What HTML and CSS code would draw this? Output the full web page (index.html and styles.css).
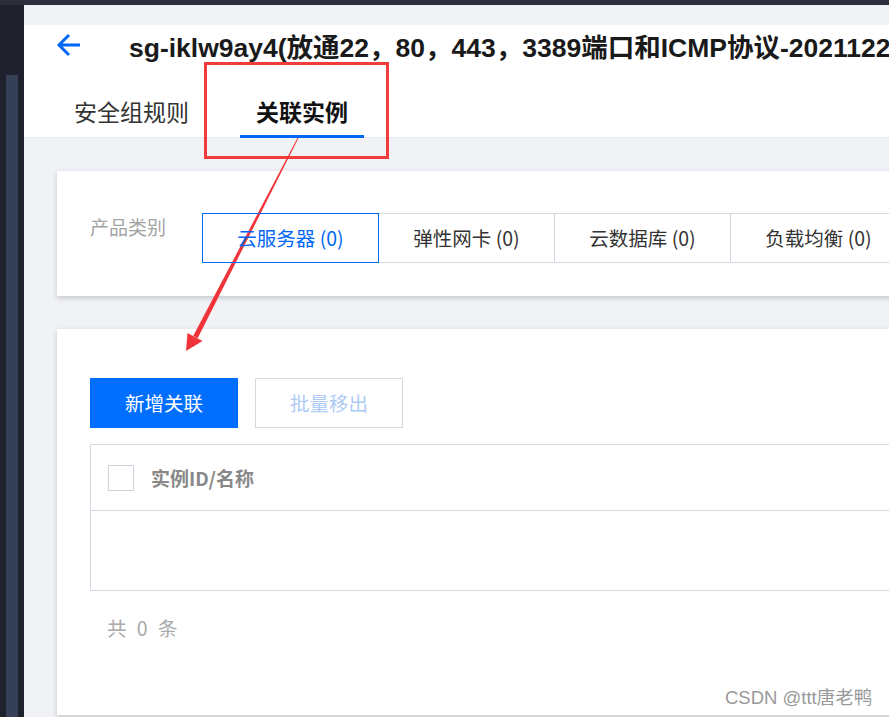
FILE: index.html
```html
<!DOCTYPE html>
<html lang="zh-CN">
  <head>
    <meta charset="UTF-8" />
    <meta name="viewport" content="width=device-width, initial-scale=1.0" />
    <title>关联实例</title>
    <link rel="stylesheet" href="styles.css">
  </head>
  <body>
    <div id="topbar"></div>
    <div id="frame">
      <div id="side">
        <div class="side-bar"></div>
      </div>
      <div id="page">
        <div id="head">
          <div class="title-row">
            <svg class="back" width="26" height="24" viewBox="0 0 26 24">
              <path d="M24 12H3M13 2L3 12l10 10" fill="none" stroke="#0067f7" stroke-width="3" />
            </svg>
            <h1>sg-iklw9ay4(放通22，80，443，3389端口和ICMP协议-20211223</h1>
          </div>
          <div class="tabs">
            <span class="tab">安全组规则</span>
            <span class="tab active">关联实例</span>
          </div>
        </div>
        <div id="content">
          <div class="card filter">
            <span class="label">产品类别</span>
            <div class="seg">
              <span class="seg-item active">云服务器 (0)</span>
              <span class="seg-item">弹性网卡 (0)</span>
              <span class="seg-item">云数据库 (0)</span>
              <span class="seg-item">负载均衡 (0)</span>
            </div>
          </div>
          <div class="card list">
            <div class="btns">
              <a class="btn primary">新增关联</a>
              <a class="btn disabled">批量移出</a>
            </div>
            <div class="table">
              <div class="thead">
                <span class="check"></span>
                <span class="col">实例ID/名称</span>
              </div>
              <div class="tbody"></div>
            </div>
            <div class="total">共&nbsp;0&nbsp;条</div>
          </div>
        </div>
      </div>
    </div>

    <!-- annotation -->
    <div class="mark-box"></div>
    <svg class="mark-arrow" width="889" height="717" viewBox="0 0 889 717">
      <polygon points="298.4,138.2 297.6,137.8 193.3,335.8 197.7,338.2" fill="#f0343a" />
      <polygon points="186,351 187.5,333 202.5,341" fill="#f0343a" />
    </svg>
    <div class="watermark">CSDN @ttt唐老鸭</div>
  </body>
</html>
```

FILE: styles.css
```css
* {
  margin: 0;
  padding: 0;
  box-sizing: border-box;
}
html,
body {
  width: 889px;
  height: 717px;
  overflow: hidden;
}
body {
  background: #1f222d;
  font-family: "Noto Sans CJK SC", "Liberation Sans", sans-serif;
  color: #333;
  position: relative;
}
#topbar {
  height: 5px;
  background: #2a2f3b;
}
#frame {
  display: flex;
  height: 712px;
}
#side {
  width: 24px;
  flex-shrink: 0;
  padding: 70px 6px 0;
}
.side-bar {
  height: 100%;
  background: #353f55;
}
#page {
  flex: 1;
  background: #f1f2f6;
  overflow: hidden;
}
#head {
  background: #fff;
  border-bottom: 1px solid #e6e9ef;
}
.title-row {
  display: flex;
  align-items: center;
  height: 40px;
  margin-top: 20px;
  padding-left: 32px;
}
.back {
  flex-shrink: 0;
}
h1 {
  margin-left: 47px;
  font-family: "Liberation Sans", "Noto Sans CJK SC", sans-serif;
  font-size: 26.5px;
  font-weight: bold;
  color: #1a1a1a;
  white-space: nowrap;
}
.tabs {
  display: flex;
  gap: 34px;
  margin-top: 23px;
  margin-bottom: -1px;
  padding-left: 33px;
}
.tab {
  padding: 0 17px;
  height: 50px;
  line-height: 46px;
  font-size: 23px;
  color: #333;
  border-bottom: 3px solid transparent;
}
.tab.active {
  padding: 0 16px 0 16px;
  font-weight: bold;
  color: #111;
  border-bottom-color: #0067f7;
}
#content {
  padding: 33px 0 0 33px;
}
.card {
  width: 900px;
  background: #fff;
  box-shadow: 0 2px 5px rgba(40, 44, 60, 0.22);
}
.filter {
  height: 125px;
  display: flex;
  padding: 42px 0 0 33px;
}
.label {
  width: 112px;
  font-size: 19px;
  line-height: 28px;
  color: #a3a3a3;
}
.seg {
  display: flex;
}
.seg-item {
  width: 177px;
  height: 50px;
  margin-left: -1px;
  border: 1px solid #d3d9e2;
  text-align: center;
  line-height: 48px;
  font-size: 19.5px;
  color: #333;
}
.seg-item.active {
  margin-left: 0;
  border-color: #0067f7;
  color: #0067f7;
  position: relative;
  z-index: 1;
}
.list {
  height: 386px;
  margin-top: 33px;
  padding: 49px 0 0 33px;
}
.btns {
  display: flex;
  gap: 17px;
}
.btn {
  width: 148px;
  height: 50px;
  line-height: 50px;
  text-align: center;
  font-size: 19.5px;
}
.btn.primary {
  background: #006eff;
  color: #fff;
}
.btn.disabled {
  border: 1px solid #d3d9e2;
  line-height: 48px;
  color: #aecbf6;
}
.table {
  margin-top: 16px;
  border: 1px solid #d3d9e2;
  border-right: none;
}
.thead {
  height: 66px;
  display: flex;
  align-items: center;
  padding-left: 17px;
  border-bottom: 1px solid #d3d9e2;
}
.check {
  width: 26px;
  height: 26px;
  border: 1px solid #cdd3dd;
  background: #fff;
}
.col {
  margin-left: 17px;
  font-size: 19px;
  font-weight: bold;
  color: #888;
}
.tbody {
  height: 79px;
}
.total {
  margin-top: 22px;
  padding-left: 17px;
  font-size: 19.5px;
  word-spacing: 6px;
  color: #aaa;
}
.mark-box {
  position: absolute;
  left: 204px;
  top: 62px;
  width: 185px;
  height: 97px;
  border: 3px solid #f23c3c;
}
.mark-arrow {
  position: absolute;
  left: 0;
  top: 0;
}
.watermark {
  position: absolute;
  left: 725px;
  top: 683px;
  font-family: "Liberation Sans", "Noto Sans CJK SC", sans-serif;
  font-size: 18.5px;
  color: #9a9a9a;
}
```
